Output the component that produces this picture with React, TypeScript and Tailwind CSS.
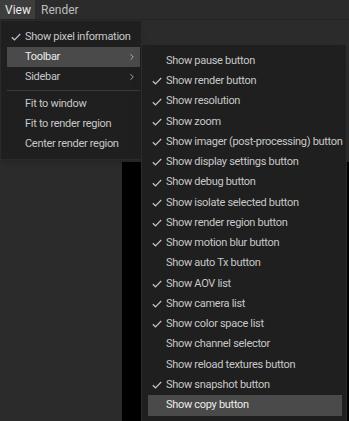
import { ChevronRight } from "lucide-react";

const toolbarItems: { label: string; checked: boolean }[] = [
  { label: "Show pause button", checked: false },
  { label: "Show render button", checked: true },
  { label: "Show resolution", checked: true },
  { label: "Show zoom", checked: true },
  { label: "Show imager (post-processing) button", checked: true },
  { label: "Show display settings button", checked: true },
  { label: "Show debug button", checked: true },
  { label: "Show isolate selected button", checked: true },
  { label: "Show render region button", checked: true },
  { label: "Show motion blur button", checked: true },
  { label: "Show auto Tx button", checked: false },
  { label: "Show AOV list", checked: true },
  { label: "Show camera list", checked: true },
  { label: "Show color space list", checked: true },
  { label: "Show channel selector", checked: false },
  { label: "Show reload textures button", checked: false },
  { label: "Show snapshot button", checked: true },
  { label: "Show copy button", checked: false },
];

function Check() {
  return (
    <svg width="10" height="8" viewBox="0 0 10 8" className="text-[#c4c4c4]">
      <polyline points="0.8,4.2 3.5,6.8 9.2,1" fill="none" stroke="currentColor" strokeWidth="1.2" />
    </svg>
  );
}

function Item({
  label,
  checked,
  active,
  submenu,
  right = "mr-1",
}: {
  label: string;
  checked?: boolean;
  active?: boolean;
  submenu?: boolean;
  right?: string;
}) {
  return (
    <div
      className={`flex items-center h-full ml-1.5 ${right} pl-[4px] pr-[3px] ${
        active ? "bg-[#4a4a4a] text-[#ececec]" : "text-[#c8c8c8]"
      }`}
    >
      <div className="w-[14px] shrink-0 flex items-center">{checked && <Check />}</div>
      <span className="flex-1 whitespace-nowrap text-left">{label}</span>
      {submenu && <ChevronRight className="w-[10px] h-[10px] shrink-0 text-[#c0c0c0]" strokeWidth={2} />}
    </div>
  );
}

export default function App() {
  return (
    <div
      className="relative w-[349px] h-[421px] overflow-hidden bg-[#2b2b2b] text-[11px] tracking-[-0.3px] flex flex-col"
      style={{ fontFamily: 'Roboto, "Open Sans", sans-serif' }}
    >
      {/* menu bar */}
      <div className="flex h-5 items-stretch border-b border-[#242424] text-[12px] tracking-normal">
        <div className="bg-[#3d3d3d] text-[#ececec] w-[35px] pl-[5px] flex items-center">View</div>
        <div className="text-[#bcbcbc] pl-[6px] flex items-center">Render</div>
      </div>

      {/* workspace */}
      <div className="flex flex-1">
        <div className="w-[122px] bg-[#2b2b2b]" />
        <div className="flex flex-col flex-1">
          <div className="h-[142px] bg-[#2b2b2b]" />
          <div className="flex-1 bg-black" />
        </div>
      </div>

      {/* View menu */}
      <div className="absolute left-0 top-5 w-[142px] h-[140px] bg-[#1f1f1f] border border-[#2a2a2a] pt-[6px] shadow-md">
        <div className="h-5"><Item label="Show pixel information" checked right="mr-[1px]" /></div>
        <div className="h-5"><Item label="Toolbar" active submenu right="mr-[1px]" /></div>
        <div className="h-5"><Item label="Sidebar" submenu right="mr-[1px]" /></div>
        <div className="h-[7px] flex items-center ml-1.5 mr-[1px]">
          <div className="h-px w-full bg-[#3a3a3a]" />
        </div>
        <div className="h-5"><Item label="Fit to window" right="mr-[1px]" /></div>
        <div className="h-5"><Item label="Fit to render region" right="mr-[1px]" /></div>
        <div className="h-5"><Item label="Center render region" right="mr-[1px]" /></div>
      </div>

      {/* Toolbar submenu */}
      <div className="absolute left-[141px] top-[44px] w-[206px] h-[380px] bg-[#1f1f1f] border border-[#2c2c2c] pt-[6px] shadow-lg flex flex-col">
        {toolbarItems.map((it, i) => (
          <div key={it.label} className="h-[20.25px] shrink-0">
            <Item label={it.label} checked={it.checked} active={i === toolbarItems.length - 1} />
          </div>
        ))}
      </div>
    </div>
  );
}
